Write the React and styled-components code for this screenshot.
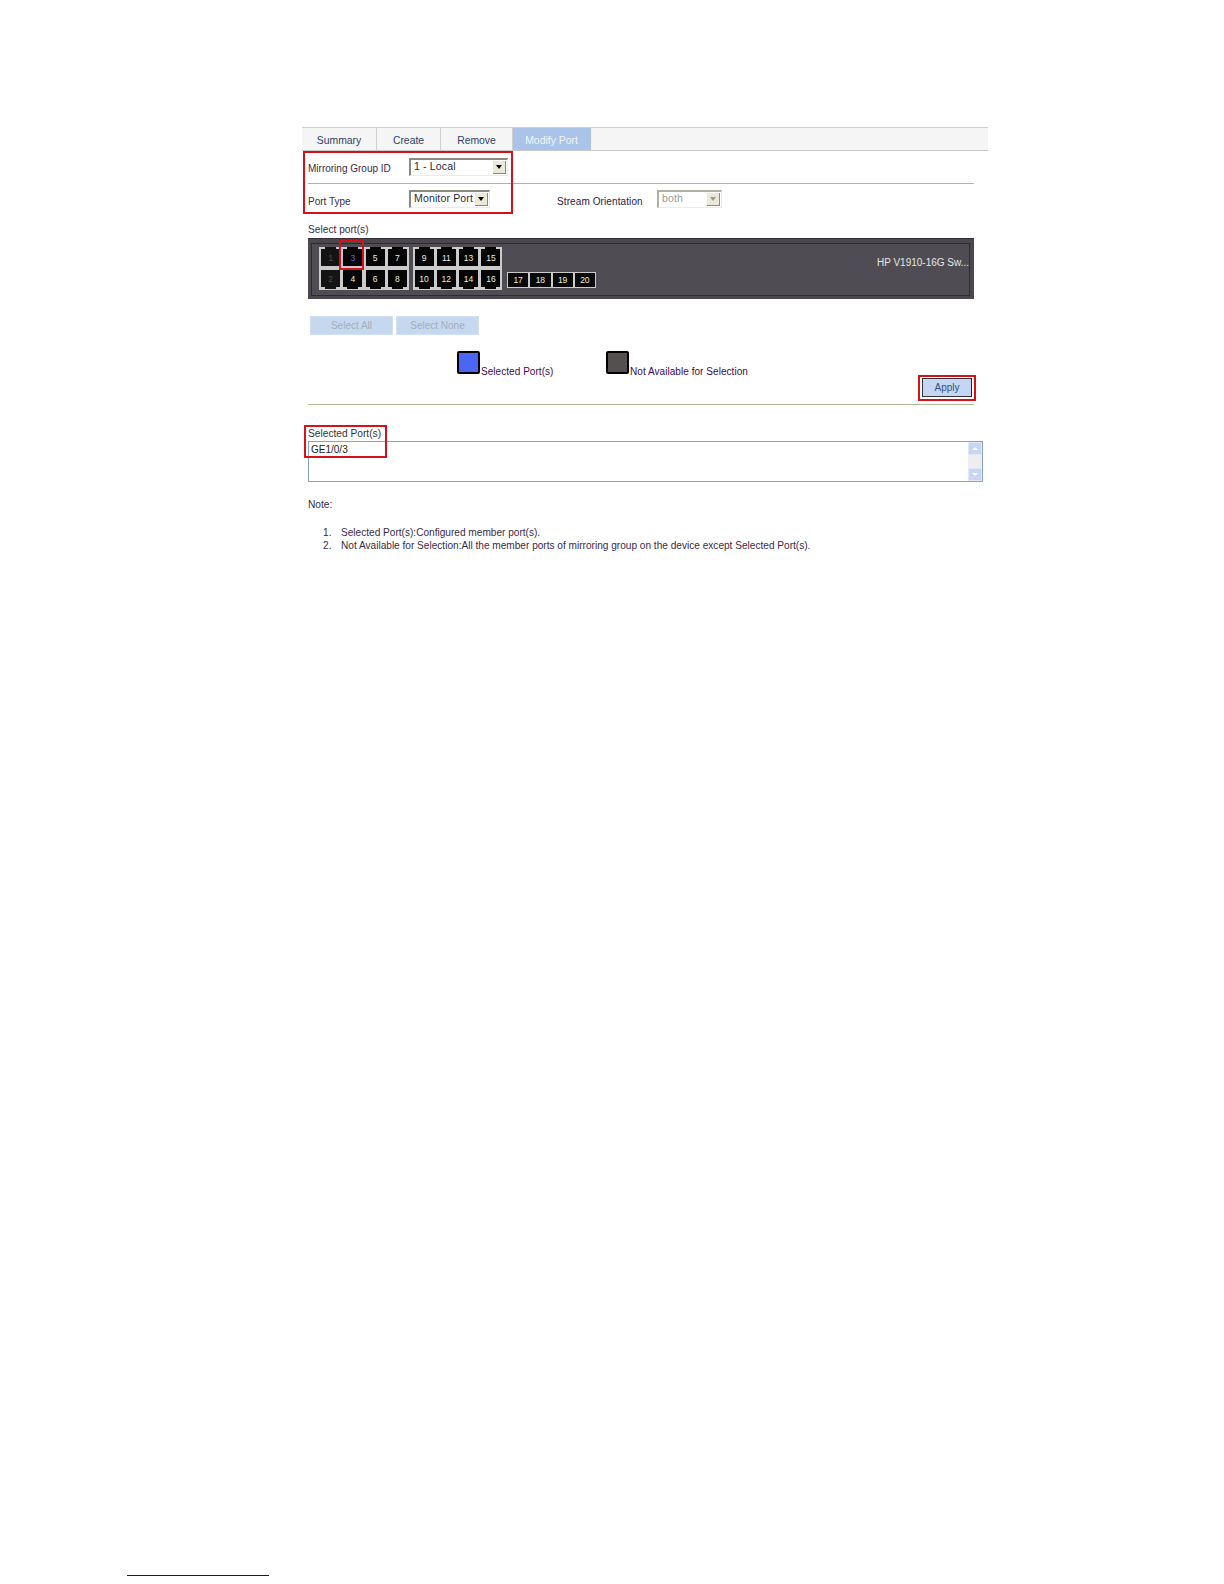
import React from 'react';
import styled, { createGlobalStyle } from 'styled-components';

const GlobalStyle = createGlobalStyle`
  html, body {
    margin: 0;
    padding: 0;
    background: #fff;
    font-family: "Liberation Sans", Arial, sans-serif;
  }
`;

const TABS = ['Summary', 'Create', 'Remove', 'Modify Port'];
const TOP_PORTS = [[1, 3, 5, 7], [9, 11, 13, 15]];
const BOTTOM_PORTS = [[2, 4, 6, 8], [10, 12, 14, 16]];
const SFP_PORTS = [17, 18, 19, 20];
const NOTES = [
  'Selected Port(s):Configured member port(s).',
  'Not Available for Selection:All the member ports of mirroring group on the device except Selected Port(s).',
];

const PortBlock = ({ top, bottom }) => (
  <Block>
    {top.map((n) => (
      <Port key={n} $state={n === 1 ? 'off' : n === 3 ? 'selected' : 'on'}>{n}</Port>
    ))}
    {bottom.map((n) => (
      <Port key={n} $bottom $state={n === 2 ? 'off' : 'on'}>{n}</Port>
    ))}
  </Block>
);

const Select = ({ width, value, disabled }) => (
  <SelectBox $width={width} $disabled={disabled}>
    <SelectValue $disabled={disabled}>{value}</SelectValue>
    <SelectArrow $disabled={disabled} />
  </SelectBox>
);

const App = () => (
  <Page>
    <GlobalStyle />
    <Main>
      <TabBar>
        {TABS.map((t, i) => (
          <Tab key={t} $active={i === 3} $width={[75, 64, 72, 78][i]}>{t}</Tab>
        ))}
      </TabBar>
      <Body>
        <GroupRow>
          <Label>Mirroring Group ID</Label>
          <Select width={99} value="1 - Local" />
        </GroupRow>
        <TypeRow>
          <Label $low>Port Type</Label>
          <Select width={81} value="Monitor Port" />
          <OrientationLabel>Stream Orientation</OrientationLabel>
          <Select width={65} value="both" disabled />
        </TypeRow>
        <SectionLabel>Select port(s)</SectionLabel>
        <Panel>
          <PanelInner>
            <PortBlock top={TOP_PORTS[0]} bottom={BOTTOM_PORTS[0]} />
            <PortBlock top={TOP_PORTS[1]} bottom={BOTTOM_PORTS[1]} />
            <SfpBlock>
              {SFP_PORTS.map((n) => <SfpPort key={n}>{n}</SfpPort>)}
            </SfpBlock>
            <DeviceName>HP V1910-16G Sw...</DeviceName>
          </PanelInner>
        </Panel>
        <ButtonRow>
          <GhostButton>Select All</GhostButton>
          <GhostButton>Select None</GhostButton>
        </ButtonRow>
        <Legend>
          <LegendItem $width={149}>
            <Swatch $color="#4a66f2" />
            <LegendText>Selected Port(s)</LegendText>
          </LegendItem>
          <LegendItem>
            <Swatch $color="#555050" />
            <LegendText>Not Available for Selection</LegendText>
          </LegendItem>
        </Legend>
        <ApplyRow>
          <ApplyButton>Apply</ApplyButton>
        </ApplyRow>
        <Rule />
        <SelectedLabel>Selected Port(s)</SelectedLabel>
        <ListBox>
          <ListText>GE1/0/3</ListText>
          <Scrollbar>
            <ScrollButton />
            <ScrollTrack />
            <ScrollButton $down />
          </Scrollbar>
        </ListBox>
        <NoteTitle>Note:</NoteTitle>
        <NoteList>
          {NOTES.map((note, i) => (
            <NoteItem key={note}>
              <NoteNumber>{i + 1}.</NoteNumber>
              {note}
            </NoteItem>
          ))}
        </NoteList>
      </Body>
      <Highlight $left={1} $top={24} $width={210} $height={63} />
      <Highlight $left={37} $top={113} $width={25} $height={30} />
      <Highlight $thick $left={616} $top={248} $width={58} $height={26} />
      <Highlight $thick $left={2} $top={298} $width={83} $height={33} />
    </Main>
    <FooterRule />
  </Page>
);

const Page = styled.div`
  display: flex;
  flex-direction: column;
  height: 1584px;
  box-sizing: border-box;
  padding-top: 127px;
  padding-bottom: 8px;
  overflow: hidden;
  color: #3a2a4a;
  font-size: 10.2px;
`;

const Main = styled.div`
  position: relative;
  width: 686px;
  margin-left: 302px;
`;

const TabBar = styled.div`
  display: flex;
  height: 22px;
  background: #f5f5f5;
  border-top: 1px solid #cfcfcf;
  border-bottom: 1px solid #c8c8c8;
`;

const Tab = styled.div`
  width: ${(p) => p.$width}px;
  box-sizing: border-box;
  display: flex;
  align-items: center;
  justify-content: center;
  padding-top: 2px;
  font-size: 10.4px;
  color: ${(p) => (p.$active ? '#f1f5fb' : '#2f3f66')};
  background: ${(p) => (p.$active ? '#a9c4e8' : 'transparent')};
  border-right: 1px solid ${(p) => (p.$active ? '#a9c4e8' : '#cfcfcf')};
`;

const Body = styled.div`
  padding: 0 5px 0 6px;
`;

const GroupRow = styled.div`
  display: flex;
  align-items: center;
  width: 666px;
  height: 32px;
  border-bottom: 1px solid #b5b79a;
`;

const TypeRow = styled.div`
  display: flex;
  align-items: center;
  height: 30px;
`;

const Label = styled.span`
  width: 101px;
  font-size: 10px;
  padding-top: ${(p) => (p.$low ? '4px' : '2px')};
`;

const OrientationLabel = styled.span`
  width: 100px;
  margin-left: 67px;
  padding-top: 4px;
  font-size: 10px;
  letter-spacing: 0.1px;
  color: #2a1a4a;
`;

const SelectBox = styled.div`
  width: ${(p) => p.$width}px;
  height: 18px;
  box-sizing: border-box;
  display: flex;
  align-items: stretch;
  justify-content: space-between;
  background: #fff;
  border-top: 2px solid ${(p) => (p.$disabled ? '#b0b0a8' : '#8a8a80')};
  border-left: 2px solid ${(p) => (p.$disabled ? '#b0b0a8' : '#8a8a80')};
  border-right: 1px solid #ecece4;
  border-bottom: 1px solid #ecece4;
`;

const SelectValue = styled.span`
  padding-left: 3px;
  font-size: 10.5px;
  line-height: 13px;
  letter-spacing: 0.15px;
  white-space: nowrap;
  color: ${(p) => (p.$disabled ? '#999' : '#2a2a3a')};
`;

const SelectArrow = styled.span`
  width: 13px;
  margin: 1px;
  box-sizing: border-box;
  display: flex;
  align-items: center;
  justify-content: center;
  background: #ece9d8;
  border-right: 1px solid #888;
  border-bottom: 1px solid #888;
  &::after {
    content: '';
    border-left: 3.5px solid transparent;
    border-right: 3.5px solid transparent;
    border-top: 4px solid ${(p) => (p.$disabled ? '#999' : '#000')};
  }
`;

const SectionLabel = styled.div`
  height: 24px;
  padding-top: 10px;
  box-sizing: border-box;
  line-height: 12px;
`;

const Panel = styled.div`
  width: 666px;
  height: 61px;
  box-sizing: border-box;
  padding: 4px 4px 3px 3px;
  background: #4a484d;
  border-top: 1px solid #33323a;
`;

const PanelInner = styled.div`
  height: 100%;
  box-sizing: border-box;
  display: flex;
  align-items: flex-start;
  gap: 4px;
  padding: 3px 0 0 7px;
  background: #4f4d53;
  border: 1px solid #2c2b30;
`;

const Block = styled.div`
  width: 89.5px;
  height: 43px;
  box-sizing: border-box;
  display: grid;
  grid-template-columns: repeat(4, 19px);
  grid-auto-rows: 17px;
  column-gap: 3.3px;
  row-gap: 4px;
  padding: 2px 0 0 2px;
  background: #cbcbcb;
`;

const Port = styled.div`
  position: relative;
  display: flex;
  align-items: center;
  justify-content: center;
  font-size: 8.5px;
  color: ${(p) => (p.$state === 'off' ? '#4a4a4a' : p.$state === 'selected' ? '#6a60f0' : '#ecece0')};
  background: ${(p) => (p.$state === 'off' ? '#141414' : '#050505')};
  &::before {
    content: '';
    position: absolute;
    left: 4px;
    right: 4px;
    height: 2px;
    background: inherit;
    ${(p) => (p.$bottom ? 'bottom: -2px;' : 'top: -2px;')}
  }
`;

const SfpBlock = styled.div`
  display: flex;
  gap: 2px;
  width: 89px;
  height: 16px;
  margin: 25px 0 0 1px;
  box-sizing: border-box;
  padding: 1px;
  background: #cbcbcb;
`;

const SfpPort = styled.div`
  flex: 1;
  display: flex;
  align-items: center;
  justify-content: center;
  background: #0a0a0a;
  color: #ecedd8;
  font-size: 8.5px;
`;

const DeviceName = styled.div`
  margin-left: auto;
  margin-top: 10px;
  color: #e6e6e6;
  font-size: 10px;
  white-space: nowrap;
`;

const ButtonRow = styled.div`
  display: flex;
  gap: 3px;
  margin: 17px 0 0 2px;
`;

const GhostButton = styled.div`
  width: 83px;
  height: 19px;
  display: flex;
  align-items: center;
  justify-content: center;
  background: #c6d7f0;
  color: #a4aeb8;
  font-size: 10px;
  border: 1px solid #d2e0f4;
  box-sizing: border-box;
`;

const Legend = styled.div`
  display: flex;
  align-items: flex-end;
  margin: 16px 0 0 149px;
`;

const LegendItem = styled.div`
  display: flex;
  align-items: flex-end;
  width: ${(p) => (p.$width ? `${p.$width}px` : 'auto')};
`;

const Swatch = styled.span`
  width: 23px;
  height: 23px;
  box-sizing: border-box;
  margin-right: 1px;
  background: ${(p) => p.$color};
  border: 2px solid #000;
  border-radius: 2px;
`;

const LegendText = styled.span`
  color: #400a4a;
  font-size: 10px;
  letter-spacing: 0.05px;
  line-height: 11px;
  margin-bottom: -3px;
`;

const ApplyRow = styled.div`
  display: flex;
  justify-content: flex-end;
  width: 664px;
  margin-top: 4px;
`;

const ApplyButton = styled.div`
  width: 50px;
  height: 19px;
  box-sizing: border-box;
  display: flex;
  align-items: center;
  justify-content: center;
  font-size: 10px;
  background: #c5d6f5;
  color: #33507a;
  border: 1px solid #333;
  border-right-color: #222;
`;

const Rule = styled.div`
  width: 666px;
  height: 1px;
  margin-top: 7px;
  background: #b5b79a;
`;

const SelectedLabel = styled.div`
  height: 36px;
  box-sizing: border-box;
  padding-top: 23px;
  line-height: 12px;
  color: #333;
`;

const ListBox = styled.div`
  display: flex;
  justify-content: space-between;
  width: 675px;
  height: 41px;
  box-sizing: border-box;
  border: 1px solid #8ba3b8;
`;

const ListText = styled.span`
  padding: 1px 0 0 2px;
  font-size: 10px;
  line-height: 13px;
  color: #222;
`;

const Scrollbar = styled.div`
  display: flex;
  flex-direction: column;
  width: 14px;
`;

const ScrollButton = styled.span`
  height: 13px;
  display: flex;
  align-items: center;
  justify-content: center;
  background: #c8d6f4;
  border: 1px solid #dfe7f8;
  box-sizing: border-box;
  &::after {
    content: '';
    border-left: 3px solid transparent;
    border-right: 3px solid transparent;
    ${(p) => (p.$down ? 'border-top: 3px solid #fff;' : 'border-bottom: 3px solid #fff;')}
  }
`;

const ScrollTrack = styled.span`
  flex: 1;
  background: #eeeeee;
`;

const NoteTitle = styled.div`
  margin-top: 17px;
  line-height: 12px;
`;

const NoteList = styled.div`
  margin-top: 15px;
  padding-left: 15px;
  font-size: 10.1px;
  line-height: 13px;
`;

const NoteItem = styled.div`
  display: flex;
  white-space: nowrap;
`;

const NoteNumber = styled.span`
  width: 18px;
`;

const Highlight = styled.div`
  position: absolute;
  left: ${(p) => p.$left}px;
  top: ${(p) => p.$top}px;
  width: ${(p) => p.$width}px;
  height: ${(p) => p.$height}px;
  box-sizing: border-box;
  border: ${(p) => (p.$thick ? '2.5px' : '2px')} solid #d8101c;
  pointer-events: none;
`;

const FooterRule = styled.div`
  width: 142px;
  height: 1.5px;
  margin: auto 0 0 127px;
  background: #10108a;
`;

export default App;
